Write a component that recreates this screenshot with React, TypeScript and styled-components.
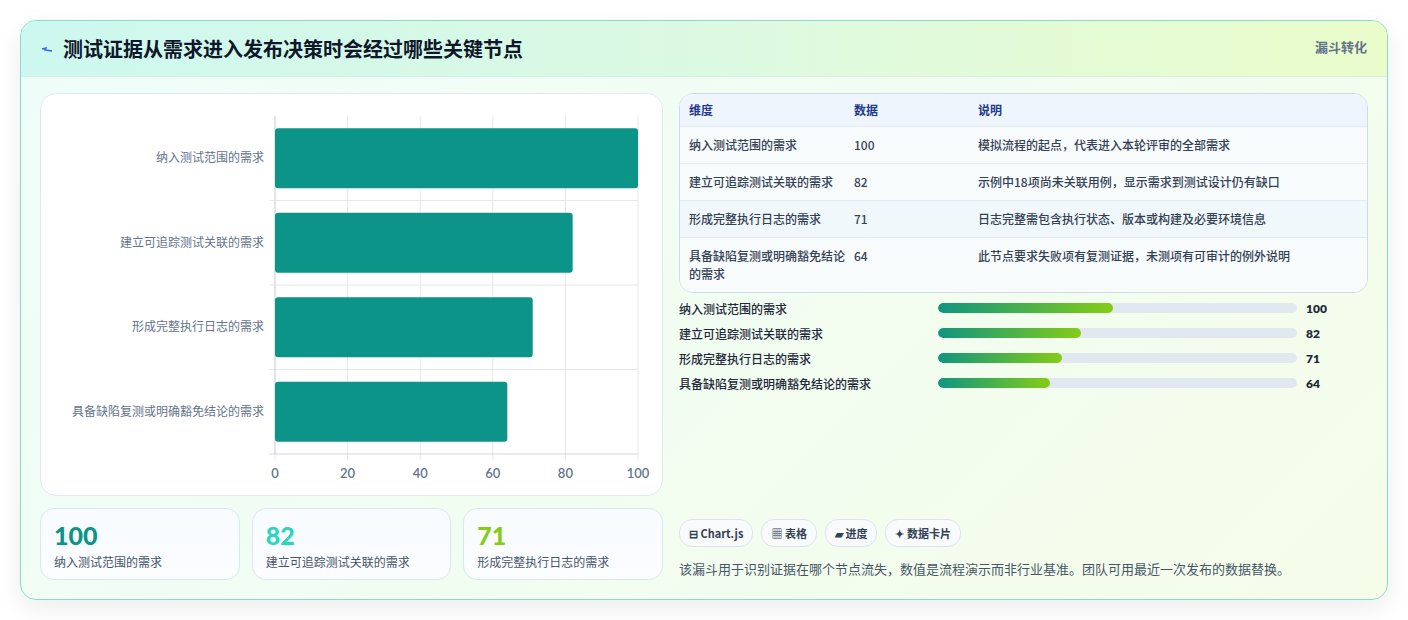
import React from "react";
import styled, { createGlobalStyle } from "styled-components";

const Global = createGlobalStyle`
  body { margin: 0; background: #fff; font-family: "Noto Sans CJK SC", "Noto Sans", sans-serif; }
`;

const Page = styled.div`padding: 20px;`;
const Card = styled.div`
  width: 1368px; height: 580px; box-sizing: border-box;
  border: 1px solid #86dcc8; border-radius: 16px; overflow: hidden;
  background: linear-gradient(135deg, #effdfa 0%, #f5fde9 100%);
  box-shadow: 0 8px 24px rgba(15, 23, 42, 0.08);
  display: flex; flex-direction: column;
`;
const Header = styled.div`
  height: 56px; flex: none; box-sizing: border-box; padding: 0 20px;
  display: flex; align-items: center; justify-content: space-between;
  background: linear-gradient(90deg, #cdf8ef 0%, #dcf9e2 50%, #eafcca 100%);
  border-bottom: 1px solid #d4f1e6;
`;
const Title = styled.h1`
  margin: 0; font-size: 20px; font-weight: 700; color: #0f172a;
  display: flex; align-items: center; gap: 10px;
`;
const Tag = styled.span`font-size: 13px; font-weight: 700; color: #64748b; align-self: flex-start; margin-top: 16px;`;
const Body = styled.div`
  flex: 1; display: grid; grid-template-columns: 623px 689px; gap: 16px;
  padding: 16px 19px 20px 19px;
`;
const Col = styled.div`display: flex; flex-direction: column; gap: 12px; min-height: 0;`;
const ChartCard = styled.div`
  height: 403px; box-sizing: border-box; background: #fff; border: 1px solid #e2e8f0;
  border-radius: 16px; position: relative;
`;
const StatRow = styled.div`display: grid; grid-template-columns: repeat(3, 1fr); gap: 12px;`;
const Stat = styled.div`
  height: 72px; box-sizing: border-box; border: 1px solid #dbe7f0; border-radius: 14px;
  background: linear-gradient(180deg, #f8fbff, #fbfdff); padding: 12px 13px;
`;
const StatNum = styled.div<{ $c: string }>`
  font-family: "Lato", sans-serif; font-weight: 900; font-size: 25px; line-height: 28px; color: ${p => p.$c};
`;
const StatLbl = styled.div`font-size: 12px; color: #475569; margin-top: 4px;`;

const Table = styled.div`
  border: 1px solid #cfdbe8; border-radius: 14px; overflow: hidden; background: #f8fafc;
`;
const Row = styled.div<{ $head?: boolean; $alt?: boolean }>`
  display: grid; grid-template-columns: 165px 124px 1fr; padding: 0 9px;
  min-height: ${p => (p.$head ? 32 : 34)}px; align-items: ${p => (p.$head ? "center" : "start")};
  background: ${p => (p.$head ? "#eef5fd" : p.$alt ? "#f1f8fb" : "#f8fbfc")};
  border-top: ${p => (p.$head ? "none" : "1px solid #e3ebf2")};
  font-size: 12px; font-weight: ${p => (p.$head ? 700 : 500)};
  color: ${p => (p.$head ? "#1e3a8a" : "#334155")};
  & > span { padding: ${p => (p.$head ? "0" : "9px 0")}; line-height: 18px; }
`;
const Bars = styled.div`display: flex; flex-direction: column; gap: 7px; margin-top: 6px;`;
const BarRow = styled.div`
  display: grid; grid-template-columns: 259px 359px 1fr; align-items: center; gap: 0;
  font-size: 12px; font-weight: 500; color: #1e293b; height: 18px;
`;
const Track = styled.div`height: 10px; border-radius: 5px; background: #e2e8f0; overflow: hidden;`;
const Fill = styled.div`height: 100%; border-radius: 5px; background: linear-gradient(90deg, #0f9580, #84cc16);`;
const BarVal = styled.span`padding-left: 9px; font-family: "Lato", sans-serif; font-weight: 800; font-size: 12px;`;
const Spacer = styled.div`flex: 1;`;
const Chips = styled.div`display: flex; gap: 8px;`;
const Chip = styled.span`
  height: 26px; padding: 0 9px; border: 1px solid #dbe4ee; border-radius: 13px; background: #f8fafc;
  display: inline-flex; align-items: center; gap: 4px; font-size: 11px; font-weight: 700; color: #334155;
`;
const Note = styled.div`font-size: 13px; color: #475569; margin-top: 2px; margin-bottom: 2px;`;

const rows = [
  ["纳入测试范围的需求", 100, "模拟流程的起点，代表进入本轮评审的全部需求"],
  ["建立可追踪测试关联的需求", 82, "示例中18项尚未关联用例，显示需求到测试设计仍有缺口"],
  ["形成完整执行日志的需求", 71, "日志完整需包含执行状态、版本或构建及必要环境信息"],
  ["具备缺陷复测或明确豁免结论的需求", 64, "此节点要求失败项有复测证据，未测项有可审计的例外说明"],
] as const;

function Chart() {
  const x0 = 234, x1 = 597, y0 = 22, y1 = 360;
  const band = (y1 - y0) / 4;
  const sx = (v: number) => x0 + ((x1 - x0) * v) / 100;
  return (
    <svg width="623" height="403" style={{ display: "block" }}>
      {[0, 20, 40, 60, 80, 100].map(v => (
        <g key={v}>
          <line x1={sx(v)} x2={sx(v)} y1={y0} y2={y1 + 6} stroke="#e5e7eb" />
          <text x={sx(v)} y={384} textAnchor="middle" fontSize="13" fontWeight="600" fill="#64748b" fontFamily="Lato, sans-serif">{v}</text>
        </g>
      ))}
      {[1, 2, 3].map(i => (
        <line key={i} x1={x0 - 6} x2={x1} y1={y0 + band * i} y2={y0 + band * i} stroke="#e5e7eb" />
      ))}
      <line x1={x0} x2={x0} y1={y0} y2={y1} stroke="#d1d5db" />
      <line x1={x0 - 6} x2={x1} y1={y1} y2={y1} stroke="#d1d5db" />
      {rows.map((r, i) => {
        const cy = y0 + band * i + band / 2;
        return (
          <g key={i}>
            <rect x={x0} y={cy - 30} width={sx(r[1]) - x0} height={60} rx="3" fill="#0d9488" />
            <text x={x0 - 11} y={cy + 4} textAnchor="end" fontSize="12" fill="#64748b">{r[0]}</text>
          </g>
        );
      })}
    </svg>
  );
}

export default function App() {
  return (
    <Page>
      <Global />
      <Card>
        <Header>
          <Title>
            <svg width="12" height="12" viewBox="0 0 12 12"><path d="M1 6 L5 5 L4 7 L11 8" stroke="#2563eb" strokeWidth="1.3" fill="none" /></svg>
            测试证据从需求进入发布决策时会经过哪些关键节点
          </Title>
          <Tag>漏斗转化</Tag>
        </Header>
        <Body>
          <Col>
            <ChartCard><Chart /></ChartCard>
            <StatRow>
              <Stat><StatNum $c="#0d9488">100</StatNum><StatLbl>纳入测试范围的需求</StatLbl></Stat>
              <Stat><StatNum $c="#2dd4bf">82</StatNum><StatLbl>建立可追踪测试关联的需求</StatLbl></Stat>
              <Stat><StatNum $c="#84cc16">71</StatNum><StatLbl>形成完整执行日志的需求</StatLbl></Stat>
            </StatRow>
          </Col>
          <Col style={{ gap: 0 }}>
            <Table>
              <Row $head><span>维度</span><span>数据</span><span>说明</span></Row>
              {rows.map((r, i) => (
                <Row key={i} $alt={i === 2}><span>{r[0]}</span><span>{r[1]}</span><span>{r[2]}</span></Row>
              ))}
            </Table>
            <Bars>
              {rows.map((r, i) => (
                <BarRow key={i}>
                  <span>{r[0]}</span>
                  <Track><Fill style={{ width: `${r[1] * 0.487}%` }} /></Track>
                  <BarVal>{r[1]}</BarVal>
                </BarRow>
              ))}
            </Bars>
            <Spacer />
            <Chips>
              <Chip>⊟ Chart.js</Chip>
              <Chip>▦ 表格</Chip>
              <Chip>▰ 进度</Chip>
              <Chip>✦ 数据卡片</Chip>
            </Chips>
            <Note style={{ marginTop: 12 }}>该漏斗用于识别证据在哪个节点流失，数值是流程演示而非行业基准。团队可用最近一次发布的数据替换。</Note>
          </Col>
        </Body>
      </Card>
    </Page>
  );
}
